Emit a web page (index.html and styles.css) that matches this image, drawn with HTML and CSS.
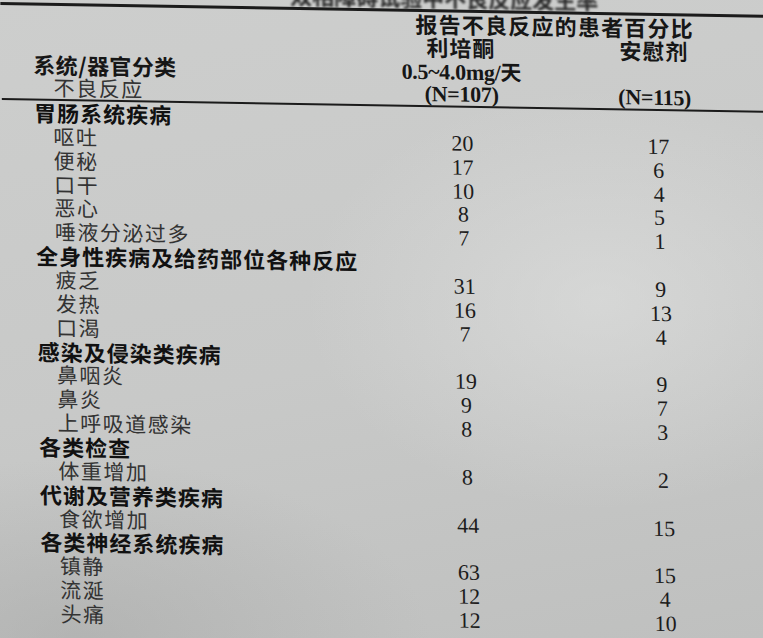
FILE: index.html
```html
<!DOCTYPE html>
<html lang="zh-CN">
<head>
<meta charset="utf-8">
<title>报告不良反应的患者百分比</title>
<link rel="stylesheet" href="styles.css">
</head>
<body>
<div class="sheet">
  <div class="caption">双相障碍试验中不良反应发生率</div>
  <div class="rule rule-top"></div>
  <div class="head">
    <div class="h-span">报告不良反应的患者百分比</div>
    <div class="h-c2 r2 bold">利培酮</div>
    <div class="h-c4 r2 bold">安慰剂</div>
    <div class="h-label r3">系统/器官分类</div>
    <div class="h-c2 r3 serif">0.5~4.0mg/<span class="cjk">天</span></div>
    <div class="h-sub r4">不良反应</div>
    <div class="h-c2 r4 serif">(N=107)</div>
    <div class="h-c4 r4 serif">(N=115)</div>
  </div>
  <div class="rule rule-mid"></div>
  <div class="body">
    <div class="row"><span class="cat">胃肠系统疾病</span></div>
    <div class="row"><span class="item">呕吐</span><span class="n1">20</span><span class="n2">17</span></div>
    <div class="row"><span class="item">便秘</span><span class="n1">17</span><span class="n2">6</span></div>
    <div class="row"><span class="item">口干</span><span class="n1">10</span><span class="n2">4</span></div>
    <div class="row"><span class="item">恶心</span><span class="n1">8</span><span class="n2">5</span></div>
    <div class="row"><span class="item">唾液分泌过多</span><span class="n1">7</span><span class="n2">1</span></div>
    <div class="row"><span class="cat">全身性疾病及给药部位各种反应</span></div>
    <div class="row"><span class="item">疲乏</span><span class="n1">31</span><span class="n2">9</span></div>
    <div class="row"><span class="item">发热</span><span class="n1">16</span><span class="n2">13</span></div>
    <div class="row"><span class="item">口渴</span><span class="n1">7</span><span class="n2">4</span></div>
    <div class="row"><span class="cat">感染及侵染类疾病</span></div>
    <div class="row"><span class="item">鼻咽炎</span><span class="n1">19</span><span class="n2">9</span></div>
    <div class="row"><span class="item">鼻炎</span><span class="n1">9</span><span class="n2">7</span></div>
    <div class="row"><span class="item">上呼吸道感染</span><span class="n1">8</span><span class="n2">3</span></div>
    <div class="row"><span class="cat">各类检查</span></div>
    <div class="row"><span class="item">体重增加</span><span class="n1">8</span><span class="n2">2</span></div>
    <div class="row"><span class="cat">代谢及营养类疾病</span></div>
    <div class="row"><span class="item">食欲增加</span><span class="n1">44</span><span class="n2">15</span></div>
    <div class="row"><span class="cat">各类神经系统疾病</span></div>
    <div class="row"><span class="item">镇静</span><span class="n1">63</span><span class="n2">15</span></div>
    <div class="row"><span class="item">流涎</span><span class="n1">12</span><span class="n2">4</span></div>
    <div class="row"><span class="item">头痛</span><span class="n1">12</span><span class="n2">10</span></div>
  </div>
</div>
</body>
</html>
```
FILE: styles.css
```css
html, body {
  margin: 0;
  padding: 0;
  width: 763px;
  height: 638px;
  overflow: hidden;
}
body {
  background:
    radial-gradient(ellipse 420px 300px at 600px 300px, rgba(225,226,225,0.55), rgba(225,226,225,0) 70%),
    radial-gradient(ellipse 500px 260px at 80px 640px, rgba(160,161,160,0.45), rgba(160,161,160,0) 70%),
    linear-gradient(170deg, #cdcecd 0%, #c8c9c8 55%, #bfc0bf 100%);
  font-family: "Noto Sans CJK SC", "Noto Sans", sans-serif;
  color: #161616;
}
.sheet {
  width: 763px;
  transform-origin: 0 0;
  transform: matrix(1, 0.0166, 0.015, 1, 0, 0);
}
.caption {
  height: 24px;
  margin-top: -23px;
  padding-left: 290px;
  font-size: 22px;
  line-height: 24px;
  font-weight: 700;
  letter-spacing: 0;
  color: #2a2a2a;
  white-space: nowrap;
  filter: blur(1.3px);
}
.rule {
  width: 790px;
  background: #1b1b1b;
}
.rule-top {
  height: 3px;
  margin-top: 1px;
}
.rule-mid {
  height: 2px;
}
.head {
  display: grid;
  grid-template-columns: 380px 160px 36px 160px;
  grid-template-rows: repeat(4, 23.25px);
  line-height: 23.25px;
  white-space: nowrap;
}
.h-span {
  grid-column: 2 / 5;
  grid-row: 1;
  text-align: center;
  font-size: 22px;
  font-weight: 700;
  letter-spacing: 1.2px;
  padding-right: 8px;
}
.r2 { grid-row: 2; }
.r3 { grid-row: 3; }
.r4 { grid-row: 4; }
.h-c2 { grid-column: 2; text-align: center; }
.h-c4 { grid-column: 4; text-align: center; padding-right: 6px; }
.bold {
  font-size: 22px;
  font-weight: 700;
  letter-spacing: 1px;
}
.serif {
  font-family: "Liberation Serif", "Noto Sans CJK SC", serif;
  font-size: 22px;
  font-weight: 700;
  letter-spacing: -0.3px;
}
.cjk {
  font-family: "Noto Sans CJK SC", sans-serif;
  font-size: 21px;
}
.h-label {
  grid-column: 1;
  padding-left: 32px;
  font-size: 22px;
  font-weight: 700;
  letter-spacing: 0.4px;
}
.h-sub {
  grid-column: 1;
  padding-left: 52px;
  font-size: 21px;
  font-weight: 400;
  letter-spacing: 1.5px;
  color: #333;
}
.body {
  display: flex;
  flex-direction: column;
}
.row {
  display: grid;
  grid-template-columns: 380px 160px 36px 160px;
  height: 23.86px;
  line-height: 23.86px;
  white-space: nowrap;
}
.cat {
  grid-column: 1;
  padding-left: 32px;
  font-size: 22px;
  font-weight: 700;
  letter-spacing: 1px;
  color: #111;
}
.item {
  grid-column: 1;
  padding-left: 51px;
  font-size: 21px;
  font-weight: 400;
  letter-spacing: 1.5px;
  color: #333;
}
.n1, .n2 {
  font-family: "Liberation Serif", serif;
  font-size: 22px;
  text-align: center;
  color: #1c1c1c;
}
.n1 { grid-column: 2; }
.n2 { grid-column: 4; }
```
